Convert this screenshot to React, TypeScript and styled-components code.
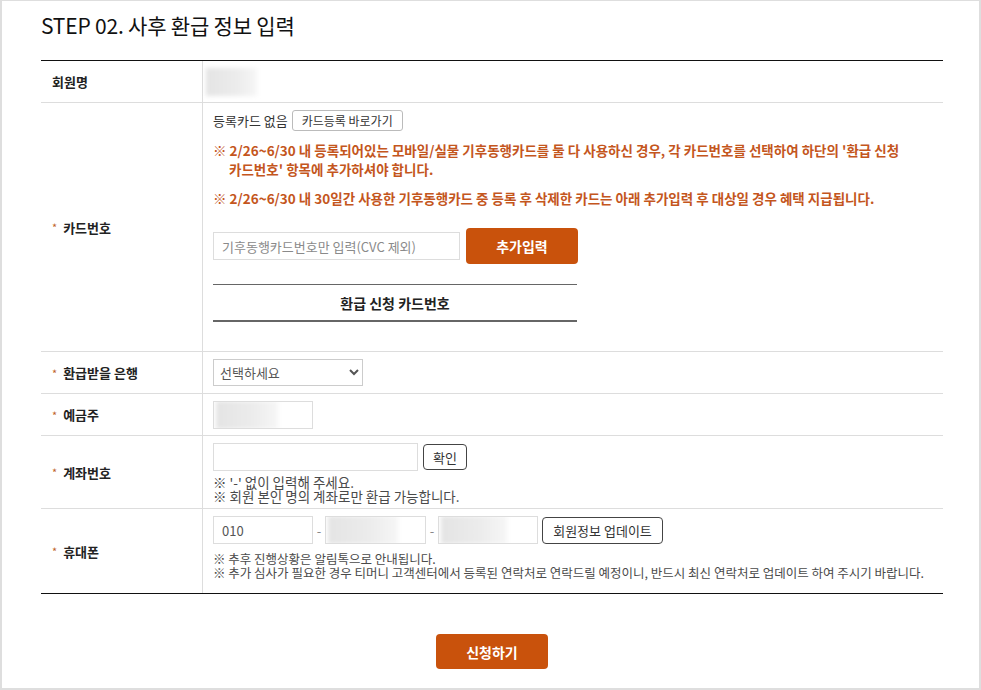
import React from "react";
import styled, { createGlobalStyle } from "styled-components";

const GlobalStyle = createGlobalStyle`
  html, body {
    margin: 0;
    padding: 0;
    background: #fff;
  }
  body {
    font-family: "Noto Sans CJK KR", "Noto Sans", sans-serif;
    color: #222;
  }
`;

const Frame = styled.div`
  box-sizing: border-box;
  width: 981px;
  height: 690px;
  border: 2px solid #dedede;
  border-top-width: 1px;
  padding: 0 36px 0 39px;
`;

const Title = styled.h1`
  margin: 0;
  padding-top: 9px;
  height: 59px;
  box-sizing: border-box;
  font-size: 21px;
  line-height: 30px;
  font-weight: 400;
  color: #111;
  letter-spacing: -0.2px;
`;

const Table = styled.div`
  border-top: 1px solid #111;
  border-bottom: 1px solid #111;
`;

const Row = styled.div<{ $h: number; $last?: boolean }>`
  display: grid;
  grid-template-columns: 162px 1fr;
  min-height: ${(p) => p.$h}px;
  border-bottom: ${(p) => (p.$last ? "none" : "1px solid #ddd")};
`;

const Label = styled.div`
  display: flex;
  align-items: center;
  padding-left: 11px;
  border-right: 1px solid #ddd;
  font-size: 13px;
  font-weight: 700;
  color: #222;
`;

const Star = styled.span`
  color: #c0622a;
  font-size: 11px;
  margin-right: 6px;
  font-weight: 400;
  vertical-align: -3px;
`;

const Cell = styled.div<{ $pt?: number; $pb?: number; $center?: boolean }>`
  padding: ${(p) => p.$pt ?? 0}px 10px ${(p) => p.$pb ?? 0}px 10px;
  display: flex;
  flex-direction: column;
  justify-content: ${(p) => (p.$center ? "center" : "flex-start")};
  font-size: 13px;
`;

const Blur = styled.div<{ $w: number; $h: number }>`
  width: ${(p) => p.$w}px;
  height: ${(p) => p.$h}px;
  background: linear-gradient(90deg, #e4e4e4, #ececec 60%, #f6f6f6);
  filter: blur(2px);
`;

const Line = styled.div<{ $gap?: number }>`
  display: flex;
  align-items: center;
  gap: ${(p) => p.$gap ?? 4}px;
`;

const Plain = styled.span`
  font-size: 13px;
  color: #333;
`;

const SmallBtn = styled.button<{ $w: number; $h: number; $dark?: boolean }>`
  width: ${(p) => p.$w}px;
  height: ${(p) => p.$h}px;
  padding: 0;
  background: #fff;
  border: 1px solid ${(p) => (p.$dark ? "#444" : "#bbb")};
  border-radius: ${(p) => (p.$dark ? 4 : 3)}px;
  font-family: inherit;
  font-size: ${(p) => (p.$dark ? 13 : 12)}px;
  color: #333;
  cursor: pointer;
`;

const Notice = styled.p<{ $mt: number }>`
  margin: ${(p) => p.$mt}px 0 0;
  padding-left: 16px;
  text-indent: -16px;
  font-size: 13.5px;
  line-height: 19px;
  font-weight: 700;
  color: #c4561d;
`;

const TextInput = styled.input<{ $w: number; $h: number }>`
  box-sizing: border-box;
  width: ${(p) => p.$w}px;
  height: ${(p) => p.$h}px;
  border: 1px solid #ddd;
  padding: 0 8px;
  font-family: inherit;
  font-size: 13px;
  color: #555;
  outline: none;
  &::placeholder {
    color: #8a8a8a;
  }
`;

const MaskedBox = styled.div<{ $w: number }>`
  box-sizing: border-box;
  width: ${(p) => p.$w}px;
  height: 28px;
  border: 1px solid #ddd;
  overflow: hidden;
  display: flex;
  align-items: center;
  padding-left: 2px;
`;

const OrangeBtn = styled.button<{ $w: number; $h: number }>`
  width: ${(p) => p.$w}px;
  height: ${(p) => p.$h}px;
  background: #c9520c;
  color: #fff;
  border: none;
  border-radius: 4px;
  font-family: inherit;
  font-size: 14px;
  font-weight: 700;
  cursor: pointer;
`;

const CardHead = styled.div`
  margin-top: 20px;
  width: 364px;
  height: 38px;
  box-sizing: border-box;
  border-top: 1px solid #666;
  border-bottom: 2px solid #666;
  display: flex;
  align-items: center;
  justify-content: center;
  font-size: 14px;
  font-weight: 700;
  color: #222;
`;

const Select = styled.select`
  width: 150px;
  height: 27px;
  border: 1px solid #ccc;
  border-radius: 0;
  background: #fff;
  font-family: inherit;
  font-size: 13px;
  color: #555;
  padding: 0 2px;
`;

const Dash = styled.span`
  width: 12px;
  text-align: center;
  color: #888;
  font-size: 13px;
`;

const Guide = styled.div<{ $size: number; $mt: number }>`
  margin-top: ${(p) => p.$mt}px;
  font-size: ${(p) => p.$size}px;
  line-height: 14px;
  color: #4a4a4a;
`;

const Footer = styled.div`
  display: flex;
  justify-content: center;
  padding-top: 40px;
`;

export default function App() {
  return (
    <>
      <GlobalStyle />
      <Frame>
        <Title>STEP 02. 사후 환급 정보 입력</Title>
        <Table>
          <Row $h={41}>
            <Label>회원명</Label>
            <Cell $center style={{ paddingLeft: 3 }}>
              <Blur $w={51} $h={28} />
            </Cell>
          </Row>
          <Row $h={248}>
            <Label>
              <Star>*</Star>카드번호
            </Label>
            <Cell $pt={7} $pb={27}>
              <Line>
                <Plain>등록카드 없음</Plain>
                <SmallBtn $w={111} $h={21}>카드등록 바로가기</SmallBtn>
              </Line>
              <Notice $mt={10}>
                ※ 2/26~6/30 내 등록되어있는 모바일/실물 기후동행카드를 둘 다 사용하신 경우, 각 카드번호를 선택하여 하단의 '환급 신청
                <br />
                카드번호' 항목에 추가하셔야 합니다.
              </Notice>
              <Notice $mt={10}>
                ※ 2/26~6/30 내 30일간 사용한 기후동행카드 중 등록 후 삭제한 카드는 아래 추가입력 후 대상일 경우 혜택 지급됩니다.
              </Notice>
              <Line $gap={6} style={{ marginTop: 20 }}>
                <TextInput $w={247} $h={28} placeholder="기후동행카드번호만 입력(CVC 제외)" />
                <OrangeBtn $w={112} $h={36}>추가입력</OrangeBtn>
              </Line>
              <CardHead>환급 신청 카드번호</CardHead>
            </Cell>
          </Row>
          <Row $h={41}>
            <Label>
              <Star>*</Star>환급받을 은행
            </Label>
            <Cell $center>
              <Select defaultValue="">
                <option value="">선택하세요</option>
              </Select>
            </Cell>
          </Row>
          <Row $h={41}>
            <Label>
              <Star>*</Star>예금주
            </Label>
            <Cell $center>
              <MaskedBox $w={100}>
                <Blur $w={62} $h={28} />
              </MaskedBox>
            </Cell>
          </Row>
          <Row $h={72}>
            <Label>
              <Star>*</Star>계좌번호
            </Label>
            <Cell $pt={7}>
              <Line $gap={5}>
                <TextInput $w={205} $h={28} />
                <SmallBtn $dark $w={44} $h={26}>확인</SmallBtn>
              </Line>
              <Guide $size={13.5} $mt={4}>
                ※ '-' 없이 입력해 주세요.
                <br />※ 회원 본인 명의 계좌로만 환급 가능합니다.
              </Guide>
            </Cell>
          </Row>
          <Row $h={84} $last>
            <Label>
              <Star>*</Star>휴대폰
            </Label>
            <Cell $pt={7}>
              <Line $gap={0}>
                <TextInput $w={100} $h={28} defaultValue="010" />
                <Dash>-</Dash>
                <MaskedBox $w={101}>
                  <Blur $w={70} $h={28} />
                </MaskedBox>
                <Dash>-</Dash>
                <MaskedBox $w={100}>
                  <Blur $w={66} $h={28} />
                </MaskedBox>
                <SmallBtn $dark $w={121} $h={27} style={{ marginLeft: 4 }}>
                  회원정보 업데이트
                </SmallBtn>
              </Line>
              <Guide $size={12.5} $mt={8}>
                ※ 추후 진행상황은 알림톡으로 안내됩니다.
                <br />※ 추가 심사가 필요한 경우 티머니 고객센터에서 등록된 연락처로 연락드릴 예정이니, 반드시 최신 연락처로 업데이트 하여 주시기 바랍니다.
              </Guide>
            </Cell>
          </Row>
        </Table>
        <Footer>
          <OrangeBtn $w={112} $h={35}>신청하기</OrangeBtn>
        </Footer>
      </Frame>
    </>
  );
}
